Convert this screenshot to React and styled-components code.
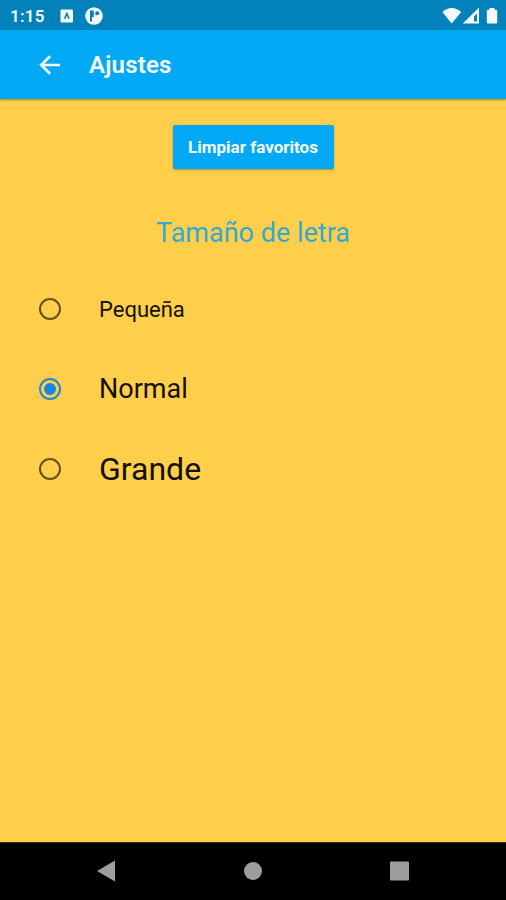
import React, { useState } from "react";
import styled, { createGlobalStyle, css } from "styled-components";

const GlobalStyle = createGlobalStyle`
  * {
    box-sizing: border-box;
  }
  body {
    margin: 0;
    font-family: Roboto, "Liberation Sans", sans-serif;
  }
`;

const Screen = styled.div`
  display: flex;
  flex-direction: column;
  height: 100vh;
  background-color: #ffce4b;
`;

const StatusBar = styled.div`
  display: flex;
  align-items: center;
  height: 30px;
  flex-shrink: 0;
  padding: 1px 8px 0 10px;
  background-color: #0281bb;
  color: #f2f9fd;
`;

const Clock = styled.span`
  width: 50px;
  font-size: 17px;
  font-weight: 600;
  letter-spacing: 0.2px;
`;

const Notifications = styled.div`
  display: flex;
  align-items: center;
  gap: 11px;
`;

const SystemIcons = styled.div`
  display: flex;
  align-items: center;
  margin-left: auto;
`;

const AppBar = styled.header`
  display: flex;
  align-items: center;
  height: 69px;
  flex-shrink: 0;
  padding-left: 39px;
  background-color: #04a9f5;
  box-shadow: 0 1px 2px rgba(70, 60, 0, 0.5);
`;

const BackButton = styled.button`
  display: flex;
  width: 50px;
  padding: 0;
  border: none;
  background: none;
`;

const Title = styled.h1`
  margin: 1px 0 0;
  color: #f4fbff;
  font-size: 24px;
  font-weight: 600;
  letter-spacing: 0.2px;
`;

const Content = styled.main`
  display: flex;
  flex-direction: column;
  align-items: center;
  flex: 1;
  padding-top: 26px;
`;

const ClearButton = styled.button`
  width: 161px;
  height: 44px;
  padding: 0 0 1px;
  border: none;
  border-radius: 2px;
  background-color: #04a9f5;
  box-shadow: 0 1px 2px rgba(70, 60, 0, 0.4);
  color: #f4fbff;
  font-family: inherit;
  font-size: 17px;
  font-weight: 700;
  white-space: nowrap;
`;

const SectionTitle = styled.h2`
  margin: 48px 0 20px;
  color: #36a9cf;
  font-size: 27px;
  font-weight: 400;
  line-height: 32px;
`;

const Options = styled.div`
  width: 100%;
  padding-left: 39px;
`;

const Option = styled.label`
  display: flex;
  align-items: center;
  height: 80px;
  color: #141003;
  font-size: ${props => props.$size}px;
`;

const Radio = styled.input`
  display: grid;
  place-items: center;
  appearance: none;
  width: 22px;
  height: 22px;
  margin: 0 38px 0 0;
  border: 2px solid #66501c;
  border-radius: 50%;

  ${props =>
    props.checked &&
    css`
      border-color: #2288d2;
      &::before {
        content: "";
        width: 12px;
        height: 12px;
        border-radius: 50%;
        background-color: #1685e3;
      }
    `};
`;

const NavBar = styled.nav`
  display: flex;
  align-items: center;
  justify-content: space-between;
  height: 58px;
  flex-shrink: 0;
  padding: 0 96px 2px;
  border-top: 1px solid #3a2f10;
  background-color: #000;
`;

const sizes = [
  { value: "small", label: "Pequeña", size: 22 },
  { value: "normal", label: "Normal", size: 27 },
  { value: "large", label: "Grande", size: 32 }
];

const App = () => {
  const [fontSize, setFontSize] = useState("normal");

  return (
    <Screen>
      <GlobalStyle />
      <StatusBar>
        <Clock>1:15</Clock>
        <Notifications>
          <svg width="14" height="14" viewBox="0 0 14 14">
            <rect x="0.5" y="0.5" width="12.5" height="13" rx="1" fill="#f2f9fd" />
            <path
              d="M4.6 9.8 6.8 4.6 9 9.8"
              fill="none"
              stroke="#0281bb"
              strokeWidth="1.6"
            />
          </svg>
          <svg width="18" height="18" viewBox="0 0 18 18">
            <circle cx="9" cy="9" r="8.8" fill="#f2f9fd" />
            <path d="M5 3.5h3.8V10H7v4.5H5Z" fill="#0281bb" />
            <circle cx="12.2" cy="6.2" r="2" fill="#0281bb" />
          </svg>
        </Notifications>
        <SystemIcons>
          <svg width="56" height="18" viewBox="0 0 56 18" fill="#f2f9fd">
            <path d="M0.3 5Q9.7-3 19.2 5L9.7 16.5Z" />
            <path
              fillRule="evenodd"
              d="M37 0.5V16.5H20.7ZM35 6.5 32 9.5V14.5H35Z"
            />
            <path d="M47.5 1h5v1.8h1.7q1 0 1 1V15.5q0 1-1 1h-8.4q-1 0-1-1V3.8q0-1 1-1h1.7Z" />
          </svg>
        </SystemIcons>
      </StatusBar>
      <AppBar>
        <BackButton aria-label="Atrás">
          <svg width="22" height="20" viewBox="0 0 22 20">
            <path
              d="M21 10H2.5M11 1.2 2.2 10 11 18.8"
              fill="none"
              stroke="#f4fbff"
              strokeWidth="2.7"
            />
          </svg>
        </BackButton>
        <Title>Ajustes</Title>
      </AppBar>
      <Content>
        <ClearButton>Limpiar favoritos</ClearButton>
        <SectionTitle>Tamaño de letra</SectionTitle>
        <Options>
          {sizes.map(({ value, label, size }) => (
            <Option key={value} $size={size}>
              <Radio
                type="radio"
                name="fontSize"
                value={value}
                checked={fontSize === value}
                onChange={e => setFontSize(e.target.value)}
              />
              {label}
            </Option>
          ))}
        </Options>
      </Content>
      <NavBar>
        <svg width="20" height="22" viewBox="0 0 20 22">
          <path d="M1 11 19 0.5v21Z" fill="#9e9e9e" />
        </svg>
        <svg width="18" height="18" viewBox="0 0 18 18">
          <circle cx="9" cy="9" r="9" fill="#9e9e9e" />
        </svg>
        <svg width="20" height="20" viewBox="0 0 20 20">
          <rect x="0" y="0.5" width="19" height="19" rx="1" fill="#9e9e9e" />
        </svg>
      </NavBar>
    </Screen>
  );
};

export default App;
